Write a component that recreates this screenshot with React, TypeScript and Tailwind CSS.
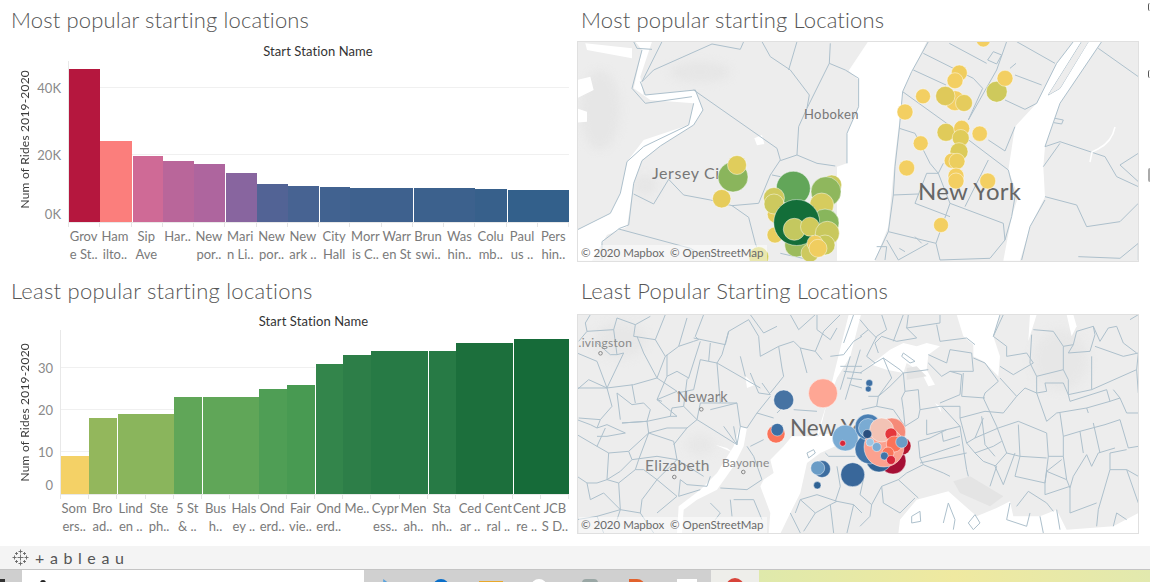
import React from "react";

const LATO = "font-['Lato','Liberation_Sans',sans-serif]";
const TITLE = "flex items-center text-[22px] font-light text-[#555]";

interface Bar {
  label: [string, string];
  value: number;
  color: string;
  gap?: boolean;
}

const popularBars: Bar[] = [
  { label: ["Grov", "e St.."], value: 45700, color: "#b5173e" },
  { label: ["Ham", "ilto.."], value: 24200, color: "#fb7e7c" },
  { label: ["Sip", "Ave"], value: 19700, color: "#cf6a96", gap: true },
  { label: ["Har..", ""], value: 18200, color: "#b9669a" },
  { label: ["New", "por.."], value: 17300, color: "#ae659e" },
  { label: ["Mari", "n Li.."], value: 14600, color: "#88659f", gap: true },
  { label: ["New", "por.."], value: 11300, color: "#526395" },
  { label: ["New", "ark .."], value: 10700, color: "#476392" },
  { label: ["City", "Hall"], value: 10400, color: "#416290", gap: true },
  { label: ["Morr", "is C.."], value: 10150, color: "#3e618e" },
  { label: ["Warr", "en St"], value: 10150, color: "#3e618e" },
  { label: ["Brun", "swi.."], value: 10150, color: "#3c618d", gap: true },
  { label: ["Was", "hin.."], value: 10150, color: "#3c618d" },
  { label: ["Colu", "mb.."], value: 9850, color: "#37608b" },
  { label: ["Paul", "us .."], value: 9550, color: "#33608b", gap: true },
  { label: ["Pers", "hin.."], value: 9550, color: "#33608b" },
];

const leastBars: Bar[] = [
  { label: ["Som", "ers.."], value: 9, color: "#f4d166" },
  { label: ["Bro", "ad.."], value: 18, color: "#93b75c" },
  { label: ["Lind", "en .."], value: 19, color: "#8ab55c", gap: true },
  { label: ["Ste", "ph.."], value: 19, color: "#8ab55c" },
  { label: ["5 St", "& .."], value: 23, color: "#60a658" },
  { label: ["Bus", "h.."], value: 23, color: "#60a658", gap: true },
  { label: ["Hals", "ey .."], value: 23, color: "#60a658" },
  { label: ["Ond", "erd.."], value: 25, color: "#4f9e55" },
  { label: ["Fair", "vie.."], value: 26, color: "#489a52" },
  { label: ["Ond", "erd.."], value: 31, color: "#33854b", gap: true },
  { label: ["Me..", ""], value: 33, color: "#2d7e48" },
  { label: ["Cypr", "ess.."], value: 34, color: "#277a45" },
  { label: ["Men", "ah.."], value: 34, color: "#277a45" },
  { label: ["Sta", "nh.."], value: 34, color: "#277a45", gap: true },
  { label: ["Ced", "ar .."], value: 36, color: "#1c6f3c" },
  { label: ["Cent", "ral .."], value: 36, color: "#1c6f3c" },
  { label: ["Cent", "re .."], value: 37, color: "#166b39", gap: true },
  { label: ["JCB", "S D.."], value: 37, color: "#166b39" },
];

function BarChart({
  bars,
  scale,
  ticks,
  axisWidth,
  plotHeight,
  headerClass,
  plotClass,
}: {
  bars: Bar[];
  scale: number;
  ticks: { label: string; value: number; shift?: number }[];
  axisWidth: string;
  plotHeight: number;
  headerClass: string;
  plotClass: string;
}) {
  return (
    <div className="flex flex-col">
      <div className={headerClass}>
        <span className="text-[13px] tracking-[0.1px] text-[#333]">Start Station Name</span>
      </div>
      <div className="flex">
        <div className={axisWidth}>
          <span className="[writing-mode:vertical-rl] rotate-180 text-[12px] tracking-[0.2px] text-[#3a3a3a] whitespace-nowrap">
            Num of Rides 2019-2020
          </span>
        </div>
        <div className={plotClass}>
          <div
            className="relative flex items-end border-l border-b border-[#e8e8e8]"
            style={{ height: plotHeight }}
          >
            {ticks.map((t) => (
              <React.Fragment key={t.label}>
                {t.value > 0 && (
                  <div
                    className="absolute inset-x-0 h-px bg-[#f0f0f0]"
                    style={{ bottom: t.value * scale }}
                  />
                )}
                <span
                  className="absolute right-full mr-[8px] text-[13px] leading-none text-[#8a8a8a] translate-y-1/2 whitespace-nowrap"
                  style={{ bottom: t.value * scale + (t.shift ?? 0) }}
                >
                  {t.label}
                </span>
              </React.Fragment>
            ))}
            {bars.map((b, i) => (
              <div
                key={i}
                className={`relative flex-1 ${b.gap ? "shadow-[inset_1px_0_0_#ffffff]" : ""}`}
                style={{ height: b.value * scale, backgroundColor: b.color }}
              />
            ))}
          </div>
          <div className="flex h-[4px] border-r border-[#e8e8e8]">
            {bars.map((_, i) => (
              <div key={i} className="flex-1 border-l border-[#e4e4e4]" />
            ))}
          </div>
          <div className="flex">
            {bars.map((b, i) => (
              <div
                key={i}
                className="flex flex-1 min-w-0 flex-col items-center text-[13px] leading-[18px] text-[#7a7a7a] whitespace-nowrap"
              >
                <div>{b.label[0]}</div>
                <div>{b.label[1] || "\u00a0"}</div>
              </div>
            ))}
          </div>
        </div>
      </div>
    </div>
  );
}

// Lines below were traced per quadrant at 3x, so a group scales them back down
const topWaterLeft = [
  "225,5 190,110 200,165 355,150 378,210 350,255 255,315 195,360 170,430 150,560 90,585 45,662 0,662 0,570 100,520 130,460 150,365 200,300 335,255 350,190 220,180 170,145 195,30 175,5",
  "25,10 165,25 165,55 30,30",
  "873,5 1049,5 979,150 954,350 934,560 894,662 780,662 780,380 810,370 810,280 845,200 845,120 815,92",
  "0,120 40,110 50,150 0,175",
  "0,205 30,215 30,245 0,248",
  "532,295 555,285 562,312 540,316",
];

const topLinesLeft = [
  "170,5 180,25 225,28",
  "255,5 195,125 230,90 405,12 490,28 500,5",
  "195,30 165,145 205,190 345,170",
  "190,125 205,165 355,150 378,210 350,255 250,318 195,362 170,430 155,555 128,565",
  "350,150 600,325 610,360 580,405 545,490 465,497 400,480 320,465 275,418 230,492 170,462",
  "555,5 580,50 640,90 697,165 690,205 665,260 660,345 610,362",
  "660,5 635,90",
  "760,10 757,70 690,205",
  "757,70 805,90 845,115 845,200 810,280 810,370",
  "660,345 720,370 775,378",
  "0,570 100,520 130,460 150,365 200,320 335,255 350,190",
  "125,567 340,625 400,660",
  "75,605 128,565",
  "75,605 75,660",
  "465,497 515,532 535,610 555,660",
  "585,405 610,410",
  "610,640 700,660",
];

const topWaterRight = [
  "640,5 725,5 600,190 555,320 550,380 555,470 510,560 480,662 430,662 455,530 475,470 445,390 465,260 530,190 590,70",
];

const topLinesRight = [
  "205,5 155,95 128,155 118,265 105,380 100,465 85,575 45,660",
  "190,40 340,115 368,145 325,240",
  "160,90 258,135",
  "128,155 260,250 445,390",
  "268,10 380,70",
  "470,5 585,70",
  "440,5 410,90 325,240",
  "465,105 545,135",
  "435,180 495,208 530,190 590,70 640,5",
  "385,300 435,333 465,260",
  "118,265 165,280 210,370 235,400 200,400 165,490 270,530",
  "235,400 250,370",
  "235,400 270,490 430,550",
  "100,465 175,462",
  "270,490 228,610 85,575",
  "228,610 240,660",
  "80,600 115,660 205,610",
  "50,620 80,620 75,660",
  "430,550 435,600 390,655 240,660",
  "385,360 315,500",
  "445,390 465,470 455,530 435,600",
  "715,25 835,110",
  "725,5 600,190 555,320 600,305 735,350 770,410 835,440",
  "665,5 565,165 600,145 685,5",
  "550,380 600,310",
  "835,340 780,375 835,425",
  "555,470 650,495 680,560 780,545 835,490",
  "555,480 510,560 485,660",
  "655,650 780,655 835,610 835,660",
  "383,60 400,35 425,45 410,72 383,60",
  "450,85 468,70",
  "585,235 610,240 605,252 582,248",
  "165,590 185,610",
  "118,625 135,635",
];

const leastWaterLeft = [
  "815,5 852,5 820,130 780,195 745,285 720,365 780,360 775,400 730,420 690,450 670,540 640,600 610,662 575,662 580,600 550,520 560,500 590,480 580,440 620,400 645,370 725,370",
  "488,340 510,345 500,400 470,460 420,530 360,560 320,590 315,662 300,662 305,580 370,530 420,480 470,400",
  "505,190 535,215 510,225",
  "415,395 470,420 450,405",
];

const leastLinesLeft = [
  "40,5 25,30 30,55 5,85",
  "30,55 110,50 120,15 175,35 220,10",
  "110,50 120,125 140,120 90,225 35,200 0,230",
  "175,35 170,70 235,80 265,5",
  "235,80 265,130 240,195",
  "330,15 305,100 265,130",
  "305,100 350,85 365,80 355,70 380,5",
  "350,75 445,95 455,55 515,20 545,70 550,130",
  "455,55 435,125 420,150 550,225",
  "370,85 335,195 300,175 270,190 270,125",
  "335,195 330,200 320,280 285,285 280,310 210,325 135,330",
  "370,140 395,145 420,150 430,270",
  "370,140 350,230 300,240",
  "0,225 90,225 170,215 240,195 300,235 240,260 255,265",
  "90,225 105,280 70,320 5,315",
  "120,240 130,320",
  "120,240 165,275 200,270 220,290 210,325",
  "165,215 175,270",
  "70,320 60,345 90,335 145,360 90,370 60,370",
  "135,330 210,325 215,360 290,385 300,440 380,490",
  "215,360 185,440 175,470 200,470 240,500 300,550",
  "320,280 360,320 330,345 290,395",
  "360,320 480,395 490,340 480,270 400,290",
  "0,365 60,400 95,420 90,500 60,510 30,510 40,560 80,540 130,590 120,620",
  "95,420 155,415 165,440 130,475 90,500",
  "175,470 125,510 130,590",
  "240,500 195,560 190,600",
  "400,490 390,520 330,515 310,500 305,550 370,530",
  "510,400 530,430 555,500 510,530 430,525",
  "520,180 545,240 580,245 555,210",
  "550,130 605,100 615,165 620,190 580,240",
  "605,100 650,85 670,105 690,180",
  "580,250 540,300 510,345 490,340",
  "540,300 590,315",
  "650,290 720,295",
  "670,105 715,115 735,140",
  "715,115 740,55 790,5",
  "720,5 720,50 760,80 780,45",
  "640,5 665,50 715,5",
  "520,5 560,60 600,40",
  "760,130 800,125 830,85 855,70",
  "790,160 855,160",
  "800,175 855,180",
  "810,195 855,200",
  "820,215 855,225",
  "820,130 790,230",
  "850,110 805,260",
  "670,560 720,545 780,565",
  "655,600 670,560 715,600 680,655",
  "715,600 760,575 780,565 830,575 855,600",
  "745,420 755,430 835,430",
  "690,420 710,410 715,420 695,435 690,420",
  "460,560 465,610",
  "400,570 430,600 415,620",
  "780,460 790,520 775,565",
  "520,400 560,380",
  "0,120 60,145 90,225",
  "200,120 240,195",
  "0,320 40,335 60,345",
  "130,590 190,600 230,660",
  "470,560 530,560 555,620",
  "760,575 770,660",
  "830,575 810,660",
  "640,600 670,660",
  "600,300 640,260",
  "800,90 830,5",
  "60,90 100,125 120,125",
  "180,70 200,120",
  "270,190 240,260 300,310 280,310",
  "430,270 480,270",
  "395,145 400,90",
  "490,130 505,190",
  "360,320 370,270 430,270",
  "215,360 270,345 330,345",
  "60,400 85,345",
  "155,415 215,360",
  "240,500 300,440",
  "30,510 0,490",
  "165,440 240,430 300,440",
  "90,500 125,510",
  "240,600 300,550",
  "60,610 130,590",
  "0,620 60,610 80,660",
  "440,340 480,395 470,340",
];

const leastWaterRight = [
  "290,5 420,5 400,70 420,130 415,190 370,145 340,130 340,95 310,70",
  "510,5 530,5 505,85",
  "620,5 640,5 650,40 635,70",
  "0,180 90,110 130,90 170,100 200,90 240,100 205,125 200,170 225,215 205,220 185,180 140,150 130,180 80,170 35,155",
  "115,662 120,620 170,560 265,535 350,610 410,585 450,565 460,610 540,610 590,590 620,650 760,640 835,600 835,662",
  "225,270 245,300 240,280",
];

const leastLinesRight = [
  "145,5 140,45 240,30 240,5",
  "140,45 170,75 110,85 65,70 45,90 55,120",
  "230,35 240,85 320,75 345,95",
  "205,125 260,150 270,110 335,120 340,175 270,175 245,190 205,150",
  "340,135 375,150 415,205 375,240 370,255 410,340",
  "310,180 305,250 375,255",
  "400,70 420,5",
  "400,70 440,100 440,130 500,120 520,150 460,185 420,160",
  "420,195 470,250 430,300 375,295 300,315",
  "470,250 495,225 530,240 560,325",
  "515,65 510,150 530,190 610,170 610,100 580,55 520,50",
  "625,120 690,115 705,65 700,40 650,55 640,95 610,100",
  "610,170 625,200 625,245 695,230 695,130",
  "695,230 830,170 835,120 790,130 705,100",
  "560,325 590,300 680,285 750,265 780,255 800,300 835,300",
  "680,285 685,300",
  "530,190 530,240 560,235 555,210 610,210 625,245",
  "625,245 630,265 740,230 750,265",
  "410,340 440,420 405,460 430,515",
  "300,315 320,390 345,375 415,345 475,325 560,360 565,430 610,430 610,370 660,355 735,335 780,320 805,405 835,400",
  "475,335 480,430 560,435",
  "480,430 465,490 555,510 560,475 605,440",
  "610,430 620,500 630,525 640,490 680,425 695,460 715,420 765,405",
  "800,410 750,420 750,470 800,470 835,570",
  "750,470 715,590 710,640",
  "630,525 630,600 710,570",
  "555,510 555,545 630,520",
  "505,535 560,570 580,595",
  "505,535 470,580",
  "130,180 135,235 175,230 180,290 240,280 300,280 300,315",
  "135,235 125,255 130,290 135,340 175,315 180,290",
  "240,270 300,245 305,185",
  "245,280 300,340 320,470 325,490",
  "175,385 210,375 260,350 300,340",
  "180,435 300,395",
  "180,450 320,420",
  "175,385 180,435 190,455 250,480 270,490",
  "200,320 200,365 260,350",
  "245,355 250,385 300,370",
  "320,390 345,420 400,400 425,385",
  "345,375 370,315",
  "405,430 375,395 365,310",
  "465,420 430,515",
  "370,445 410,460 390,520",
  "140,480 190,455",
  "140,480 115,500 65,520 70,570 120,600",
  "65,520 35,575 0,545 10,500",
  "35,575 30,610 0,640",
  "115,500 175,555",
  "120,600 165,555",
  "0,180 45,150 70,135 120,170 130,180 90,220 55,250 50,280 100,290 135,340",
  "55,250 25,250",
  "130,180 205,170",
  "5,290 50,280",
  "70,135 95,195 55,250",
  "0,20 25,50 0,70",
  "25,50 50,75",
  "65,5 80,50 50,70 20,130 45,150",
  "100,85 130,5",
  "810,20 835,5",
  "130,120 165,145 150,150 125,130 130,120",
  "155,610 180,595 182,625 155,630 155,610",
  "250,630 265,570 285,620 280,650",
  "325,630 345,605 360,630 340,650 325,630",
  "450,570 440,620 500,640 510,600",
  "540,610 550,660",
  "590,590 600,650",
  "760,640 770,600 800,620",
  "430,5 400,70",
  "700,40 720,85 745,45 770,40 790,90 830,120",
  "640,95 625,120",
  "830,170 835,240",
  "760,230 780,255",
  "610,370 600,300",
  "660,355 670,420",
  "565,430 555,510",
  "480,430 440,420",
  "620,500 560,475",
  "835,490 800,470",
  "270,175 305,185",
  "345,420 370,445",
  "720,420 700,330",
];

function Lines({
  x,
  y,
  water,
  lines,
  patches = [],
}: {
  x: number;
  y: number;
  water: string[];
  lines: string[];
  patches?: string[];
}) {
  return (
    <g transform={`translate(${x} ${y}) scale(0.3333)`}>
      {water.map((p, i) => (
        <polygon key={i} points={p} fill="#ffffff" />
      ))}
      {patches.map((p, i) => (
        <polygon key={i} points={p} fill="#e4e4e4" />
      ))}
      {lines.map((p, i) => (
        <polyline
          key={i}
          points={p}
          fill="none"
          stroke="#adc0cc"
          strokeWidth="1"
          vectorEffect="non-scaling-stroke"
        />
      ))}
    </g>
  );
}

type Dot = [number, number, number, string];

const topDots: Dot[] = [
  [758.7, 256.7, 10, "#d3cf5f"],
  [733, 177, 15, "#8ab55c"],
  [737, 165, 9.5, "#e0cd5c"],
  [721.7, 198.7, 9.2, "#e6cc5b"],
  [793.3, 188.3, 17, "#62a659"],
  [831.7, 185, 10, "#cbc95d"],
  [826, 191.7, 15, "#8fb75d"],
  [821.7, 205, 12, "#d6cc5e"],
  [825, 223, 14, "#88b65c"],
  [776, 214.3, 8.7, "#e5cc5c"],
  [775, 235, 8, "#e8cd5d"],
  [774, 198, 10.5, "#d0ca5e"],
  [774, 204, 10, "#cdc95e"],
  [796.7, 245, 12, "#9cbb5c"],
  [796.7, 222.5, 23, "#136e39"],
  [794.3, 229.3, 11, "#c4c85f"],
  [810, 226.7, 9.5, "#d0ca5c"],
  [827.3, 233.3, 12, "#c9c85d"],
  [825, 245, 10, "#c8c85a"],
  [810, 253, 9, "#cdc95f"],
  [815, 243.3, 8, "#efcd5e"],
  [818, 248.3, 9, "#f0cd5f"],
  [983.3, 40, 7, "#f3cf62"],
  [959.3, 73, 8, "#f0cd5e"],
  [955, 80.7, 8, "#f3cf62"],
  [923, 96.3, 7.5, "#f3cf62"],
  [955, 100.7, 10, "#f3cf62"],
  [945.3, 96, 9.7, "#dfc95a"],
  [964, 103, 8.5, "#e5cc5d"],
  [996.7, 91.7, 10.5, "#cec95c"],
  [1005, 78.3, 8, "#f3cf62"],
  [905, 112, 8, "#f3cf62"],
  [946, 132.3, 9, "#e0cb5a"],
  [961.7, 128.3, 8, "#f0cd5e"],
  [960.7, 138, 8.5, "#e0cc5a"],
  [979.7, 133.7, 7.7, "#f3cf62"],
  [920.7, 143.3, 7.5, "#f3cf62"],
  [959, 151.7, 9, "#dccb5a"],
  [951.7, 160.7, 7.5, "#f0cd5e"],
  [957, 161.3, 8, "#ecce5e"],
  [906.7, 168, 8, "#f3cf62"],
  [956, 176, 8, "#f3cf62"],
  [956, 181, 8, "#f3cf62"],
  [987.7, 181, 8, "#f3cf62"],
  [941, 225, 7.5, "#f3cf62"],
];

const leastDots: Dot[] = [
  [823, 393.3, 14.5, "#fea694"],
  [783.7, 400, 10, "#4673a3"],
  [776, 434, 9, "#fb7359"],
  [777.3, 429.7, 6.3, "#3d6fa3"],
  [845.3, 438, 13, "#7aabd3"],
  [842.7, 443.3, 3, "#d8273a"],
  [822, 469, 8.5, "#3d6d9f"],
  [817.7, 468, 7, "#6a9cc6"],
  [852.7, 474.7, 12, "#39679a"],
  [817.3, 485.3, 3.7, "#2f6294"],
  [869.3, 383, 3.5, "#3d6fa3"],
  [868.3, 389, 3, "#3d6fa3"],
  [893, 461, 13, "#a50f35"],
  [902, 446, 9, "#b2162f"],
  [891.7, 432, 14, "#f58a78"],
  [879, 459, 13, "#2f6294"],
  [870, 449, 15, "#4174a8"],
  [868, 427, 13, "#4a7fb3"],
  [884, 447, 20, "#fba18f"],
  [868, 428, 9.5, "#7aabd3"],
  [881.7, 430, 12, "#f2c3b5"],
  [891, 434, 6, "#e5373c"],
  [894.3, 444, 8, "#fb7359"],
  [901.7, 442, 6, "#6a9cc6"],
  [867.3, 434, 4.5, "#2a4f7f"],
  [870, 442.3, 4, "#9cc5e3"],
  [876.7, 447, 4.5, "#7aabd3"],
  [888, 453, 6, "#f9755a"],
  [884.3, 456, 4, "#3f74a8"],
  [891, 460, 4.5, "#d8273a"],
];

function Dots({ dots }: { dots: Dot[] }) {
  return (
    <>
      {dots.map(([cx, cy, r, fill], i) => (
        <circle
          key={i}
          cx={cx}
          cy={cy}
          r={r}
          fill={fill}
          stroke="#ffffff"
          strokeOpacity="0.45"
          strokeWidth="1"
        />
      ))}
    </>
  );
}

function Attribution() {
  return (
    <div className="absolute left-[1px] bottom-0 h-[16px] w-[188px] bg-white/50 pl-[2px] text-[11.5px] leading-[16px] text-[#6a6a6a] whitespace-nowrap">
      © 2020 Mapbox &nbsp;© OpenStreetMap
    </div>
  );
}

function PopularMap() {
  return (
    <div className="relative h-[221px] w-[562px] overflow-hidden border border-[#e0e0e0] bg-[#ededed]">
      <svg viewBox="578 42 560 219" className="block h-full w-full">
        <g className="blur-[4px]" fill="#e6e6e6">
          <ellipse cx="600" cy="110" rx="20" ry="40" />
          <ellipse cx="700" cy="72" rx="30" ry="10" />
          <ellipse cx="645" cy="185" rx="12" ry="10" />
        </g>
        <Lines
          x={577}
          y={40}
          water={topWaterLeft}
          lines={topLinesLeft}
        />
        <Lines
          x={860}
          y={40}
          water={topWaterRight}
          lines={topLinesRight}
        />
        {/* sliver of land between the two channels of the East River */}
        <polygon points="1081.7,42 1088.3,42 1060,88.3 1048.3,95" fill="#ededed" />
        <path
          d="M1115 127 Q1112 142 1098 149 L1092 152 L1090 162"
          fill="none"
          stroke="#fff"
          strokeWidth="1.5"
        />
        <text x="804" y="119" fontSize="13" letterSpacing="0.4" fill="#777">
          Hoboken
        </text>
        <text x="652" y="179" fontSize="16" letterSpacing="0.6" fill="#777">
          Jersey City
        </text>
        <text x="918" y="200" fontSize="24" letterSpacing="0.3" fill="#666">
          New York
        </text>
        <Dots dots={topDots} />
      </svg>
      <Attribution />
    </div>
  );
}

function LeastMap() {
  return (
    <div className="relative h-[220px] w-[562px] overflow-hidden border border-[#e0e0e0] bg-[#ededed]">
      <svg viewBox="578 315 560 218" className="block h-full w-full">
        <g className="blur-[5px]" fill="#e7e7e7">
          <ellipse cx="620" cy="340" rx="26" ry="18" />
          <ellipse cx="700" cy="445" rx="14" ry="10" />
          <ellipse cx="1060" cy="360" rx="28" ry="30" />
        </g>
        <Lines
          x={577}
          y={313}
          water={leastWaterLeft}
          lines={leastLinesLeft}
        />
        <Lines
          x={860}
          y={313}
          water={leastWaterRight}
          lines={leastLinesRight}
          patches={[
            "280,505 330,490 430,550 390,580 300,540",
            "140,165 170,160 200,190 140,200",
          ]}
        />
        <text x="578.5" y="347" fontSize="12" letterSpacing="0.3" fill="#8a8a8a">
          .ivingston
        </text>
        <circle cx="600.5" cy="353.3" r="1.8" fill="none" stroke="#888" />
        <text x="677" y="402" fontSize="14.5" letterSpacing="0.2" fill="#808080">
          Newark
        </text>
        <circle cx="701.3" cy="409.3" r="1.8" fill="none" stroke="#888" />
        <text x="645" y="471" fontSize="15.5" letterSpacing="0.3" fill="#808080">
          Elizabeth
        </text>
        <circle cx="674.3" cy="477" r="1.8" fill="none" stroke="#888" />
        <text x="722" y="467" fontSize="12" letterSpacing="0.2" fill="#8a8a8a">
          Bayonne
        </text>
        <circle cx="743.3" cy="472" r="1.8" fill="none" stroke="#888" />
        <text x="790" y="436" fontSize="22.5" fill="#666">
          New York
        </text>
        <Dots dots={leastDots} />
      </svg>
      <Attribution />
    </div>
  );
}

function TableauMark() {
  const crosses: [number, number, number][] = [
    [8.5, 8.5, 3],
    [8.5, 2.5, 2],
    [8.5, 14.5, 2],
    [2.5, 8.5, 2],
    [14.5, 8.5, 2],
    [4.5, 4.5, 1.5],
    [12.5, 4.5, 1.5],
    [4.5, 12.5, 1.5],
    [12.5, 12.5, 1.5],
  ];
  return (
    <svg width="17" height="17" viewBox="0 0 17 17">
      {crosses.map(([x, y, s], i) => (
        <path
          key={i}
          d={`M${x - s} ${y}H${x + s}M${x} ${y - s}V${y + s}`}
          stroke="#666"
          strokeWidth="0.9"
          fill="none"
        />
      ))}
    </svg>
  );
}

function Taskbar() {
  return (
    <div className="flex h-[13px] overflow-hidden border-t border-[#c4c4c4]">
      <div className="w-[22px] bg-[#cfcfcf] flex items-end">
        <div className="h-[3px] w-[5px] bg-[#333]" />
      </div>
      <div className="w-[342px] bg-white pl-[18px] pt-[10px]">
        <div className="h-[4px] w-[6px] rounded-t-full bg-[#222]" />
      </div>
      <div className="flex w-[347px] bg-[#d0d0d0] pt-[9px]">
        <div className="ml-[16px] h-4 w-4 bg-[#5ba3dc] [clip-path:polygon(20%_0,100%_60%,20%_100%)]" />
        <div className="ml-[37px] h-4 w-4 rounded-full bg-[#0a6fc9]" />
        <div className="ml-[30px] mt-[2px] h-4 w-6 bg-[#e9a82a]" />
        <div className="ml-[28px] h-4 w-4 rounded-full bg-white" />
        <div className="ml-[35px] h-4 w-4 rounded-t-sm bg-[#9aa7a5]" />
        <div className="ml-[31px] h-4 w-4 rounded-tr-lg bg-[#e2622d]" />
        <div className="ml-[32px] h-4 w-5 bg-white" />
      </div>
      <div className="flex w-[48px] justify-center bg-[#eeeeea] pt-[8px]">
        <div className="h-[18px] w-[18px] rounded-full bg-[#d8443a]" />
      </div>
      <div className="flex-1 bg-gradient-to-r from-[#dfe9ab] via-[#efe9a0] to-[#e2e9ae]" />
    </div>
  );
}

export default function App() {
  return (
    <div className={`flex h-[582px] w-[1150px] flex-col overflow-hidden bg-white ${LATO}`}>
      <div className="grid h-[546px] grid-cols-[577px_573px] grid-rows-[271px_275px]">
        <div>
          <h2 className={`${TITLE} h-[41px] pb-[3px] pl-[11px] tracking-[0.15px]`}>
            Most popular starting locations
          </h2>
          <BarChart
            bars={popularBars}
            scale={161 / 48060}
            ticks={[
              { label: "40K", value: 40000 },
              { label: "20K", value: 20000 },
              { label: "0K", value: 0, shift: 8 },
            ]}
            axisWidth="flex h-[161px] w-[68px] items-center pb-[5px] pl-[16px]"
            plotHeight={162}
            headerClass="flex h-[20px] items-center justify-center pl-[59px] pt-[1px] w-[577px]"
            plotClass="w-[501px]"
          />
        </div>
        <div className="relative">
          <h2 className={`${TITLE} h-[41px] pb-[3px] pl-[4px] tracking-[0.15px]`}>
            Most popular starting Locations
          </h2>
          <PopularMap />
          {/* slivers of something cut off by the window edge */}
          <div className="absolute left-[571px] top-[3px] h-[8px] w-[2px] rounded-l-full border-l border-[#555]" />
          <div className="absolute left-[571px] top-[70px] h-[8px] w-[2px] rounded-l-full border-l border-[#555]" />
          <div className="absolute left-[571px] top-[168px] h-[14px] w-[2px] rounded-l-full border-l-2 border-[#aaa]" />
        </div>
        <div>
          <h2 className={`${TITLE} h-[43px] pb-[5px] pl-[11px] tracking-[0.25px]`}>
            Least popular starting locations
          </h2>
          <BarChart
            bars={leastBars}
            scale={4.2}
            ticks={[
              { label: "30", value: 30 },
              { label: "20", value: 20 },
              { label: "10", value: 10 },
              { label: "0", value: 0, shift: 9 },
            ]}
            axisWidth="flex h-[164px] w-[60px] items-center pl-[16px]"
            plotHeight={165}
            headerClass="flex h-[16px] items-center justify-center pl-[50px] w-[577px]"
            plotClass="w-[509px]"
          />
        </div>
        <div>
          <h2 className={`${TITLE} h-[43px] pb-[5px] pl-[4px] tracking-[0.2px]`}>
            Least Popular Starting Locations
          </h2>
          <LeastMap />
        </div>
      </div>
      <div className="flex h-[23px] items-center gap-[6px] bg-[#f4f4f4] pl-[12px]">
        <TableauMark />
        <span className="text-[16px] tracking-[5.6px] text-[#555]">+ableau</span>
      </div>
      <Taskbar />
    </div>
  );
}
